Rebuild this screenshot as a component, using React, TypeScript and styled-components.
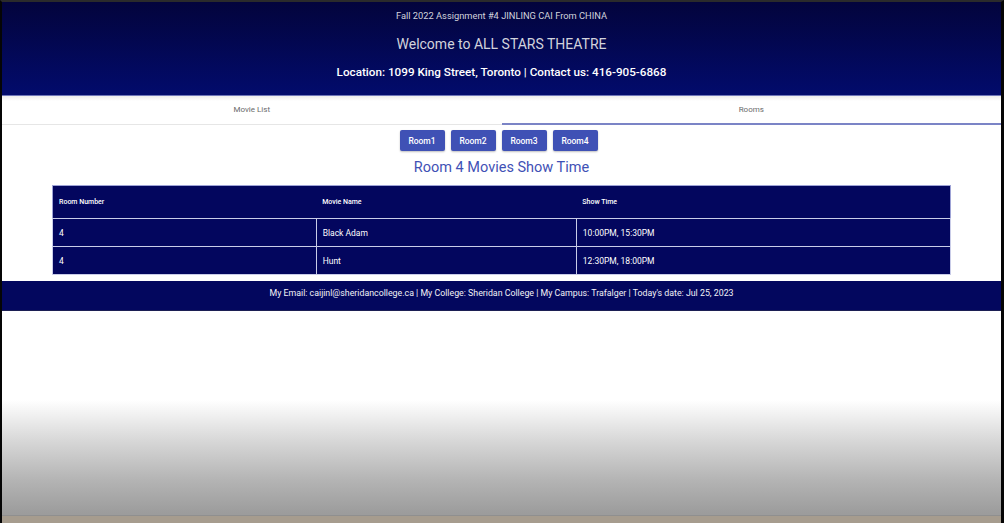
import styled, { createGlobalStyle } from 'styled-components';

const GlobalStyle = createGlobalStyle`
  html, body {
    margin: 0;
    padding: 0;
    background: #000;
  }
  body {
    font-family: Roboto, "Liberation Sans", Arial, sans-serif;
  }
`;

const Frame = styled.div`
  width: 1004px;
  height: 523px;
  box-sizing: border-box;
  border-left: 2px solid #050505;
  border-right: 3px solid #050505;
  border-top: 2px solid #2b2b2b;
  display: flex;
  flex-direction: column;
  background: #fff;
  overflow: hidden;
`;

const Header = styled.header`
  background: linear-gradient(to bottom, #03043c, #020b6c);
  color: #d6d6de;
  text-align: center;
  padding-bottom: 9px;
  border-bottom: 1px solid #6f76b8;
`;

const HeaderLine = styled.div<{ $size: number; $weight?: number; $color?: string }>`
  line-height: 28px;
  font-size: ${(p) => p.$size}px;
  font-weight: ${(p) => p.$weight ?? 400};
  color: ${(p) => p.$color ?? '#d2d3dc'};
`;

const Tabs = styled.nav`
  display: flex;
  height: 28px;
  background: linear-gradient(to bottom, #ececec, #fff 5px);
  border-bottom: 1px solid #e6e6e6;
`;

const Tab = styled.div<{ $active?: boolean }>`
  flex: 1;
  display: flex;
  align-items: center;
  justify-content: center;
  font-size: 8px;
  color: #6a6a6a;
  box-sizing: border-box;
  border-bottom: 2px solid ${(p) => (p.$active ? '#7b84c6' : 'transparent')};
  margin-bottom: -1px;
`;

const Content = styled.main`
  display: flex;
  flex-direction: column;
  align-items: center;
  padding-top: 5px;
`;

const ButtonRow = styled.div`
  display: flex;
  gap: 6px;
  margin-right: 6px;
`;

const RoomButton = styled.button`
  width: 45px;
  height: 21px;
  border: none;
  border-radius: 2px;
  background: #3f51b5;
  color: #fff;
  font-family: Roboto, "Liberation Sans", Arial, sans-serif;
  font-size: 8.5px;
  font-weight: 500;
  padding: 0;
  box-shadow: 0 1px 2px rgba(0, 0, 0, 0.25);
`;

const Title = styled.h2`
  margin: 7px 0 7px;
  font-size: 14.5px;
  font-weight: 400;
  line-height: 20px;
  color: #3f51b5;
`;

const Table = styled.table`
  width: 899px;
  border-collapse: collapse;
  background: #03065e;
  color: #fff;
  border: 1.5px solid #9ea3d6;
`;

const HeadCell = styled.th<{ $width: number }>`
  width: ${(p) => p.$width}px;
  height: 32px;
  text-align: left;
  padding: 0 0 0 6px;
  font-size: 7px;
  font-weight: 500;
`;

const Cell = styled.td`
  height: 27px;
  padding: 0 0 0 6px;
  font-size: 8.5px;
  border: 1.5px solid #c9cce8;
`;

const Footer = styled.footer`
  margin-top: 6px;
  height: 30px;
  box-sizing: border-box;
  padding-bottom: 5px;
  display: flex;
  align-items: center;
  justify-content: center;
  background: #03075e;
  color: #f2f2f6;
  font-size: 8.8px;
  border-bottom: 1px solid #1c1f54;
`;

const Fade = styled.div`
  flex: 1;
  display: flex;
  flex-direction: column;
  background: linear-gradient(
    to bottom,
    #fff 0px,
    #fff 125px,
    #d8d8d8 165px,
    #b4b4b4 205px,
    #9c9c9c 238px
  );
`;

const Spacer = styled.div`
  flex: 1;
`;

const Taskbar = styled.div`
  height: 7px;
  background: #a69c8e;
  border-top: 1px solid #8f8f8f;
`;

const shows = [
  { room: '4', movie: 'Black Adam', time: '10:00PM, 15:30PM' },
  { room: '4', movie: 'Hunt', time: '12:30PM, 18:00PM' },
];

export default function App() {
  return (
    <>
      <GlobalStyle />
      <Frame>
        <Header>
          <HeaderLine $size={9.3}>Fall 2022 Assignment #4 JINLING CAI From CHINA</HeaderLine>
          <HeaderLine $size={14}>Welcome to ALL STARS THEATRE</HeaderLine>
          <HeaderLine $size={11.7} $weight={500} $color="#ffffff">
            Location: 1099 King Street, Toronto | Contact us: 416-905-6868
          </HeaderLine>
        </Header>
        <Tabs>
          <Tab>Movie List</Tab>
          <Tab $active>Rooms</Tab>
        </Tabs>
        <Content>
          <ButtonRow>
            <RoomButton>Room1</RoomButton>
            <RoomButton>Room2</RoomButton>
            <RoomButton>Room3</RoomButton>
            <RoomButton>Room4</RoomButton>
          </ButtonRow>
          <Title>Room 4 Movies Show Time</Title>
          <Table>
            <thead>
              <tr>
                <HeadCell $width={263}>Room Number</HeadCell>
                <HeadCell $width={260}>Movie Name</HeadCell>
                <HeadCell $width={376}>Show Time</HeadCell>
              </tr>
            </thead>
            <tbody>
              {shows.map((s) => (
                <tr key={s.movie}>
                  <Cell>{s.room}</Cell>
                  <Cell>{s.movie}</Cell>
                  <Cell>{s.time}</Cell>
                </tr>
              ))}
            </tbody>
          </Table>
        </Content>
        <Fade>
          <Footer>
            My Email: caijinl@sheridancollege.ca | My College: Sheridan College | My Campus: Trafalger | Today's date: Jul 25, 2023
          </Footer>
          <Spacer />
          <Taskbar />
        </Fade>
      </Frame>
    </>
  );
}
